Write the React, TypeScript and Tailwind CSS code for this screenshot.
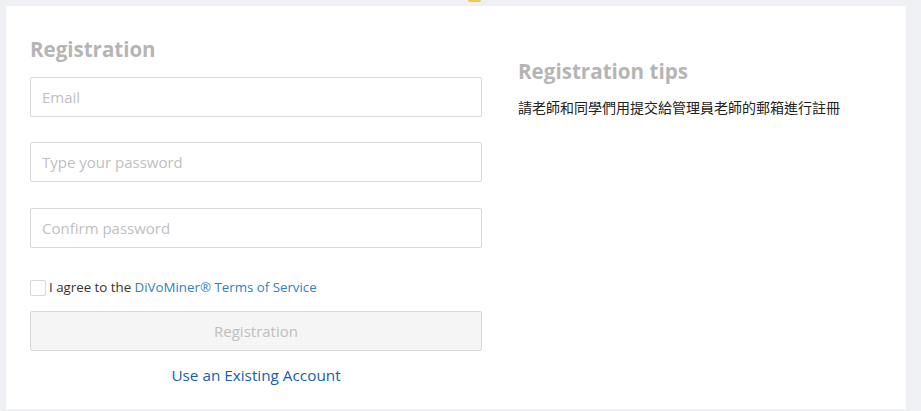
import React from "react";

export default function App() {
  const font = { fontFamily: '"Open Sans", "Noto Sans CJK TC", sans-serif' };
  return (
    <div className="w-[921px] h-[411px] bg-[#eff0f4] pt-[6px] pl-[6px] relative overflow-hidden" style={font}>
      <div className="absolute left-[468px] top-0 w-[13px] h-[2px] bg-[#f2c94c] rounded-b-sm" />
      <div className="w-[900px] h-[403px] bg-white flex">
        <div className="w-[452px] ml-[24px] flex flex-col">
          <h1 className="mt-[28px] h-[30px] text-[20.5px] leading-[30px] font-bold text-[#b5b5b5]">Registration</h1>
          <input
            placeholder="Email"
            className="mt-[13px] h-[40px] w-full border border-[#d9d9d9] rounded-[2px] px-[11px] text-[15px] placeholder:text-[#bfbfbf] outline-none"
          />
          <input
            placeholder="Type your password"
            className="mt-[25px] h-[40px] w-full border border-[#d9d9d9] rounded-[2px] px-[11px] text-[15px] placeholder:text-[#bfbfbf] outline-none"
          />
          <input
            placeholder="Confirm password"
            className="mt-[26px] h-[40px] w-full border border-[#d9d9d9] rounded-[2px] px-[11px] text-[15px] placeholder:text-[#bfbfbf] outline-none"
          />
          <div className="mt-[31px] flex items-center h-[18px]">
            <span className="w-[16px] h-[16px] border border-[#d9d9d9] rounded-[2px] bg-white" />
            <span className="ml-[3px] text-[13.3px] text-[#333]">
              I agree to the <span className="text-[#2f7fc1]">DiVoMiner® Terms of Service</span>
            </span>
          </div>
          <button className="mt-[14px] h-[40px] w-full border border-[#d9d9d9] rounded-[2px] bg-[#f5f5f5] text-[15px] text-[#bfbfbf]">
            Registration
          </button>
          <div className="mt-[13px] text-center text-[15.3px] text-[#1560ae]">Use an Existing Account</div>
        </div>
        <div className="ml-[36px] flex flex-col">
          <h2 className="mt-[50px] h-[30px] text-[20.6px] leading-[30px] font-bold text-[#b5b5b5]">Registration tips</h2>
          <p className="mt-[11px] text-[14px] text-[#222]" style={{ fontFamily: '"Noto Sans CJK TC", sans-serif' }}>
            請老師和同學們用提交給管理員老師的郵箱進行註冊
          </p>
        </div>
      </div>
    </div>
  );
}
